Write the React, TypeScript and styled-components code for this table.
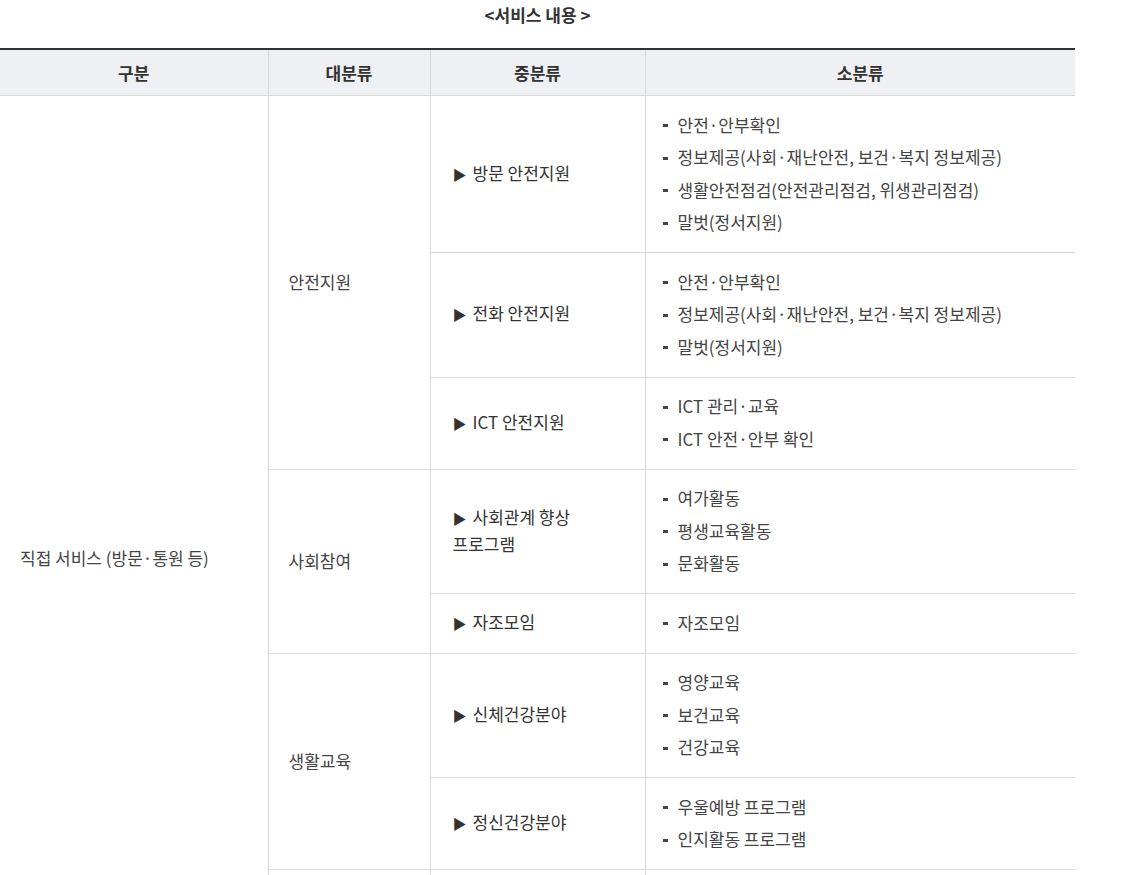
import styled, { createGlobalStyle } from "styled-components";

const GlobalStyle = createGlobalStyle`
  body {
    margin: 0;
    background: #fff;
    font-family: "Noto Sans CJK KR", "Noto Sans", sans-serif;
  }
`;

type Mid = { title: string; items: string[] };
type Group = { major: string; mids: Mid[] };

const groups: Group[] = [
  {
    major: "안전지원",
    mids: [
      {
        title: "방문 안전지원",
        items: [
          "안전·안부확인",
          "정보제공(사회·재난안전, 보건·복지 정보제공)",
          "생활안전점검(안전관리점검, 위생관리점검)",
          "말벗(정서지원)",
        ],
      },
      {
        title: "전화 안전지원",
        items: ["안전·안부확인", "정보제공(사회·재난안전, 보건·복지 정보제공)", "말벗(정서지원)"],
      },
      { title: "ICT 안전지원", items: ["ICT 관리·교육", "ICT 안전·안부 확인"] },
    ],
  },
  {
    major: "사회참여",
    mids: [
      { title: "사회관계 향상 프로그램", items: ["여가활동", "평생교육활동", "문화활동"] },
      { title: "자조모임", items: ["자조모임"] },
    ],
  },
  {
    major: "생활교육",
    mids: [
      { title: "신체건강분야", items: ["영양교육", "보건교육", "건강교육"] },
      { title: "정신건강분야", items: ["우울예방 프로그램", "인지활동 프로그램"] },
    ],
  },
  {
    major: "일상생활지원",
    mids: [
      { title: "이동활동지원", items: ["외출동행"] },
      { title: "가사지원", items: ["식사관리", "청소관리"] },
    ],
  },
];

const Wrap = styled.div`
  width: 1075px;
`;

const Title = styled.h3`
  margin: 0;
  height: 48px;
  padding-top: 3px;
  box-sizing: border-box;
  text-align: center;
  font-size: 17px;
  font-weight: 700;
  line-height: 24px;
  color: #333;
`;

const Table = styled.table`
  width: 1075px;
  border-collapse: collapse;
  table-layout: fixed;
  border-top: 2px solid #333;
  font-size: 17px;
  color: #444;
  word-break: keep-all;
`;

const Th = styled.th`
  height: 45px;
  padding: 0;
  background: #eff0f4;
  border-bottom: 1px solid #d8d8d8;
  border-left: 1px solid #d8d8d8;
  font-weight: 700;
  color: #333;
  &:first-child {
    border-left: none;
  }
`;

const Td = styled.td<{ $pl: number }>`
  padding: 12px 24px 14px ${(p) => p.$pl}px;
  border-bottom: 1px solid #d8d8d8;
  border-left: 1px solid #d8d8d8;
  vertical-align: middle;
  line-height: 25px;
`;

const FirstTd = styled(Td)`
  border-left: none;
`;

const MidTitle = styled.div`
  color: #333;
  &::before {
    content: "▶";
    display: inline-block;
    margin-right: 6px;
    font-size: 14px;
  }
`;

const List = styled.ul`
  list-style: none;
  margin: 0;
  padding: 0;
`;

const Item = styled.li`
  position: relative;
  padding: 3.75px 0 3.75px 15px;
  &::before {
    content: "";
    position: absolute;
    left: 0;
    top: 16px;
    width: 5px;
    height: 3px;
    background: #444;
  }
`;

export default function App() {
  const total = groups.reduce((n, g) => n + g.mids.length, 0);
  return (
    <Wrap>
      <GlobalStyle />
      <Title>&lt;서비스 내용 &gt;</Title>
      <Table>
        <colgroup>
          <col style={{ width: 268 }} />
          <col style={{ width: 162 }} />
          <col style={{ width: 215 }} />
          <col style={{ width: 430 }} />
        </colgroup>
        <thead>
          <tr>
            <Th>구분</Th>
            <Th>대분류</Th>
            <Th>중분류</Th>
            <Th>소분류</Th>
          </tr>
        </thead>
        <tbody>
          {groups.map((g, gi) =>
            g.mids.map((m, mi) => (
              <tr key={`${gi}-${mi}`}>
                {gi === 0 && mi === 0 && (
                  <FirstTd $pl={20} rowSpan={total}>
                    직접 서비스 (방문·통원 등)
                  </FirstTd>
                )}
                {mi === 0 && (
                  <Td $pl={20} rowSpan={g.mids.length}>
                    {g.major}
                  </Td>
                )}
                <Td $pl={22}>
                  <MidTitle>{m.title}</MidTitle>
                </Td>
                <Td $pl={17}>
                  <List>
                    {m.items.map((it) => (
                      <Item key={it}>{it}</Item>
                    ))}
                  </List>
                </Td>
              </tr>
            ))
          )}
        </tbody>
      </Table>
    </Wrap>
  );
}
